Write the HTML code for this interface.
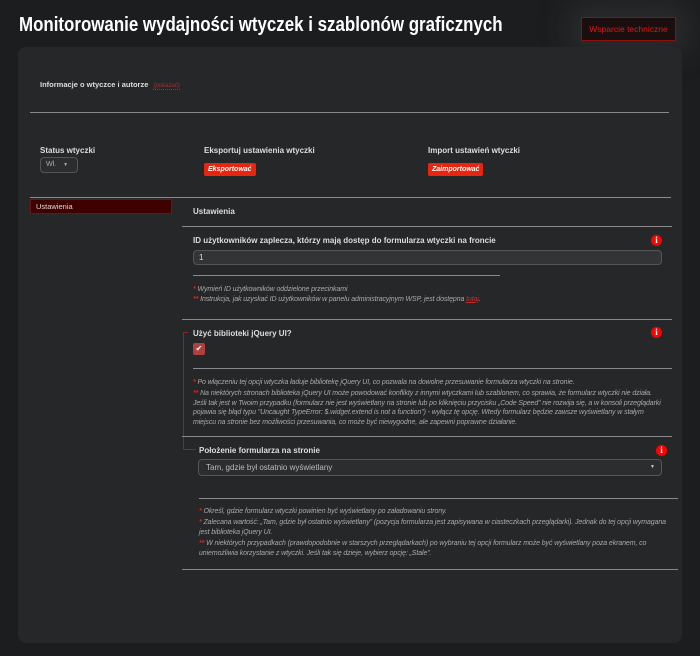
<!DOCTYPE html>
<html><head><meta charset="utf-8"><style>
*{box-sizing:border-box;margin:0;padding:0}
body{width:700px;height:656px;background:#1c1d1f;font-family:"Liberation Sans",sans-serif;color:#ddd;position:relative;overflow:hidden}
.a{position:absolute}
h1{position:absolute;left:19px;top:14px;font-size:20px;font-weight:bold;color:#fff;transform:scaleX(0.845);transform-origin:left;white-space:nowrap}
.sup{left:581px;top:17px;width:95px;height:24px;border:1px solid #8a0f0f;background:#1a0e0e;color:#e01818;font-size:8.5px;text-align:center;line-height:22px;box-shadow:0 0 30px 12px rgba(90,90,90,.25)}
.panel{left:18px;top:47px;width:664px;height:596px;background:#262729;border-radius:8px}
.hr{position:absolute;height:1px;background:#8a8a8a}
.lb{font-size:8px;font-weight:bold;color:#ddd}
.btn{background:#e8260f;color:#fff;font-size:7px;font-style:italic;font-weight:bold;border-radius:2px;padding:0 4px;height:13px;line-height:13px}
.note{font-size:7px;font-style:italic;color:#aaa;line-height:9.5px;letter-spacing:-0.1px}
.note b{color:#e02020;font-weight:bold}
.info{width:11px;height:11px;border-radius:50%;background:#f00;color:#fff;font-size:9px;font-weight:bold;text-align:center;line-height:11px;font-family:"Liberation Serif",serif}
.inp{border:1px solid #555;border-radius:4px;background:#333436;font-size:8px;color:#ddd;padding-left:5px}
</style></head><body>
<h1>Monitorowanie wydajności wtyczek i szablonów graficznych</h1>
<div class="a sup">Wsparcie techniczne</div>
<div class="a panel"></div>
<div class="a lb" style="left:40px;top:80px;font-size:7.5px">Informacje o wtyczce i autorze <span style="color:#a03030;font-style:italic;font-weight:normal;font-size:6px;border-bottom:1px dotted #a03030;margin-left:3px">(pokazać)</span></div>
<div class="hr" style="left:30px;top:112px;width:639px"></div>
<div class="a lb" style="left:40px;top:146px">Status wtyczki</div>
<div class="a inp" style="left:40px;top:157px;width:38px;height:16px;line-height:14px;font-size:7px;background:#2c2d2f;color:#aaa">Wł. <span style="font-size:5px;margin-left:5px">▼</span></div>
<div class="a lb" style="left:204px;top:146px">Eksportuj ustawienia wtyczki</div>
<div class="a btn" style="left:204px;top:163px">Eksportować</div>
<div class="a lb" style="left:428px;top:146px">Import ustawień wtyczki</div>
<div class="a btn" style="left:428px;top:163px">Zaimportować</div>
<div class="hr" style="left:30px;top:197px;width:641px"></div>
<div class="a" style="left:30px;top:199px;width:142px;height:15px;background:#3f0000;border:1px solid #6b1515;font-size:7.5px;line-height:13px;padding-left:5px;color:#ddd">Ustawienia</div>
<div class="a lb" style="left:193px;top:207px">Ustawienia</div>
<div class="hr" style="left:182px;top:226px;width:490px"></div>
<div class="a lb" style="left:193px;top:236px">ID użytkowników zaplecza, którzy mają dostęp do formularza wtyczki na froncie</div>
<div class="a info" style="left:651px;top:235px">i</div>
<div class="a inp" style="left:193px;top:250px;width:469px;height:15px;line-height:13px">1</div>
<div class="hr" style="left:193px;top:275px;width:307px"></div>
<div class="a note" style="left:193px;top:285px"><b>*</b> Wymień ID użytkowników oddzielone przecinkami<br><b>**</b> Instrukcja, jak uzyskać ID użytkowników w panelu administracyjnym WSP, jest dostępna <span style="color:#c03030;text-decoration:underline">tutaj</span>.</div>
<div class="hr" style="left:182px;top:319px;width:490px"></div>
<div class="a" style="left:183px;top:332px;width:5px;height:118px;border-left:1px solid #a01c1c;border-top:1px solid #a01c1c"></div>
<div class="a" style="left:183px;top:449px;width:13px;height:1px;background:#a01c1c"></div>
<div class="a lb" style="left:193px;top:329px">Użyć biblioteki jQuery UI?</div>
<div class="a info" style="left:651px;top:327px">i</div>
<div class="a" style="left:193px;top:343px;width:12px;height:12px;background:#b04040;border-radius:2px;color:#fff;font-size:8px;text-align:center;line-height:12px">✔</div>
<div class="hr" style="left:193px;top:368px;width:479px"></div>
<div class="a note" style="left:193px;top:378px;width:475px"><b>*</b> Po włączeniu tej opcji wtyczka ładuje bibliotekę jQuery UI, co pozwala na dowolne przesuwanie formularza wtyczki na stronie.</div>
<div class="a note" style="left:193px;top:389px;width:470px"><b>**</b> Na niektórych stronach biblioteka jQuery UI może powodować konflikty z innymi wtyczkami lub szablonem, co sprawia, że formularz wtyczki nie działa. Jeśli tak jest w Twoim przypadku (formularz nie jest wyświetlany na stronie lub po kliknięciu przycisku „Code Speed” nie rozwija się, a w konsoli przeglądarki pojawia się błąd typu "Uncaught TypeError: $.widget.extend is not a function") - wyłącz tę opcję. Wtedy formularz będzie zawsze wyświetlany w stałym miejscu na stronie bez możliwości przesuwania, co może być niewygodne, ale zapewni poprawne działanie.</div>
<div class="hr" style="left:182px;top:436px;width:490px"></div>
<div class="a lb" style="left:199px;top:446px">Położenie formularza na stronie</div>
<div class="a info" style="left:656px;top:445px">i</div>
<div class="a inp" style="left:198px;top:459px;width:464px;height:17px;line-height:15px;padding-left:7px;background:#2c2d2f;color:#bbb">Tam, gdzie był ostatnio wyświetlany<span style="position:absolute;right:6px;font-size:5px;color:#ccc">▼</span></div>
<div class="hr" style="left:199px;top:498px;width:479px"></div>
<div class="a note" style="left:199px;top:507px;width:480px"><b>*</b> Określ, gdzie formularz wtyczki powinien być wyświetlany po załadowaniu strony.</div>
<div class="a note" style="left:199px;top:518px;width:470px"><b>*</b> Zalecana wartość: „Tam, gdzie był ostatnio wyświetlany” (pozycja formularza jest zapisywana w ciasteczkach przeglądarki). Jednak do tej opcji wymagana jest biblioteka jQuery UI.</div>
<div class="a note" style="left:199px;top:539px;width:480px"><b>**</b> W niektórych przypadkach (prawdopodobnie w starszych przeglądarkach) po wybraniu tej opcji formularz może być wyświetlany poza ekranem, co uniemożliwia korzystanie z wtyczki. Jeśli tak się dzieje, wybierz opcję: „Stale”.</div>
<div class="hr" style="left:182px;top:569px;width:496px"></div>
</body></html>
